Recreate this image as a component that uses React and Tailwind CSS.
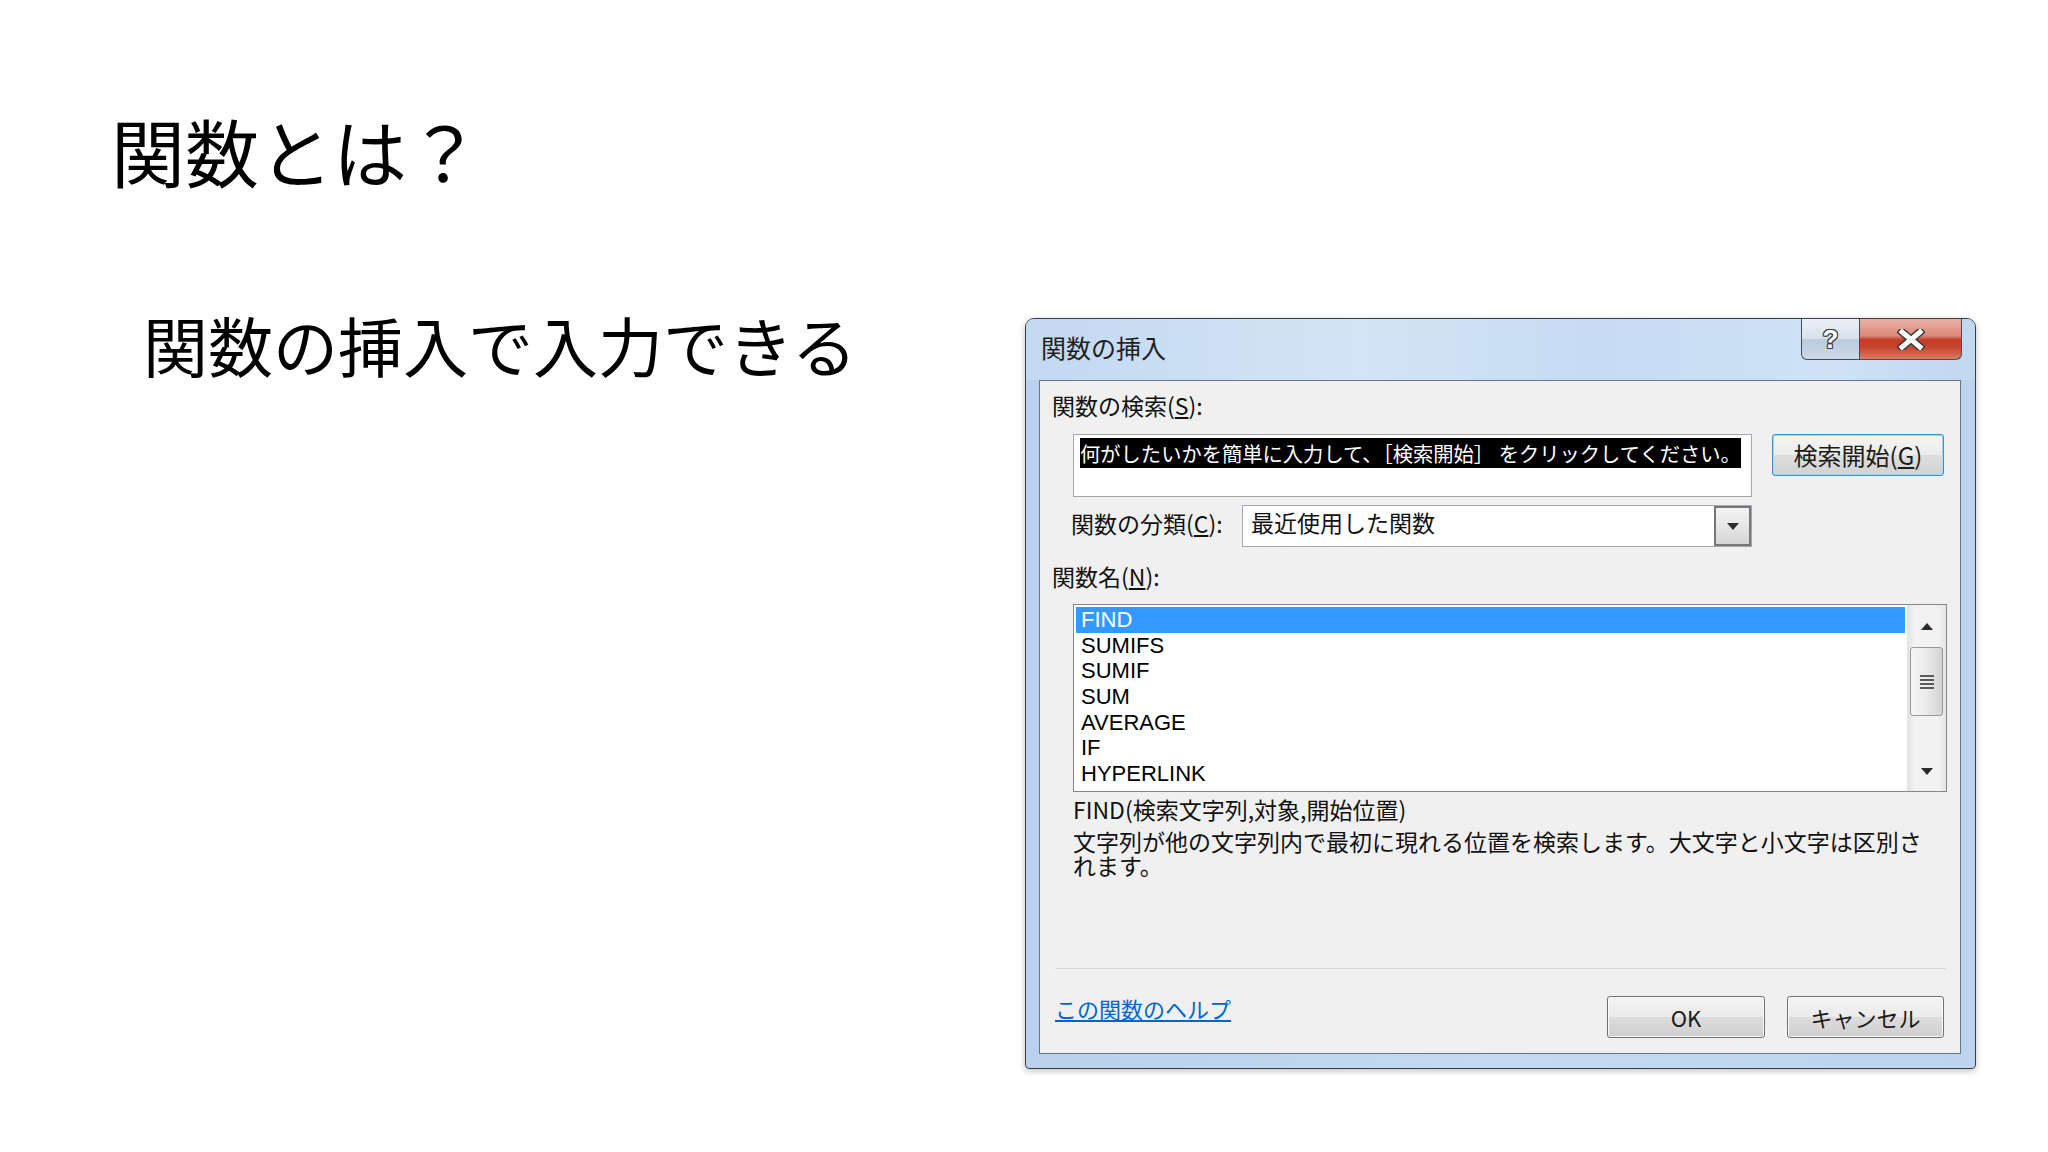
import React from "react";

const FONT = "font-['Noto_Sans_CJK_JP','Noto_Sans',sans-serif]";

const FUNCS = ["FIND", "SUMIFS", "SUMIF", "SUM", "AVERAGE", "IF", "HYPERLINK"];

function Arrow({ up, className = "" }) {
  return (
    <svg width="12" height="7" viewBox="0 0 12 7" className={className}>
      {up ? <path d="M0 7 L6 0 L12 7 Z" fill="#2b2b2b" /> : <path d="M0 0 L12 0 L6 7 Z" fill="#2b2b2b" />}
    </svg>
  );
}

function WinButton({ children, className = "" }) {
  return (
    <div
      className={`flex items-center justify-center rounded-[3px] border border-[#707070] bg-[linear-gradient(#f2f2f2_0%,#ebebeb_50%,#dddddd_50%,#cfcfcf_100%)] shadow-[inset_0_0_0_1px_#fbfbfb] text-[22px] leading-none text-[#1a1a1a] ${className}`}
    >
      {children}
    </div>
  );
}

function TitleButtons() {
  return (
    <div className="flex h-[41px]">
      {/* help */}
      <div className="flex w-[59px] items-center justify-center rounded-bl-[6px] border border-t-0 border-[#474d55] bg-[linear-gradient(#eaf0f7_0%,#d8e2ed_48%,#bccbdc_52%,#cbd9e8_100%)]">
        <span className="font-['Liberation_Sans',sans-serif] text-[26px] font-bold leading-none text-white [text-shadow:1px_0_#3a3a3a,-1px_0_#3a3a3a,0_1px_#3a3a3a,0_-1px_#3a3a3a,1px_1px_#3a3a3a,-1px_-1px_#3a3a3a,1px_-1px_#3a3a3a,-1px_1px_#3a3a3a]">
          ?
        </span>
      </div>
      {/* close */}
      <div className="flex w-[102px] items-center justify-center rounded-br-[6px] border border-l-0 border-t-0 border-[#474d55] bg-[linear-gradient(#eab0a3_0%,#dc8a78_42%,#c53c24_52%,#c8462f_72%,#dc7b64_100%)]">
        <svg width="28" height="21" viewBox="0 0 28 21">
          <path d="M5 3 L23 18 M23 3 L5 18" stroke="#3a3a3a" strokeWidth="8" strokeLinecap="square" />
          <path d="M5 3 L23 18 M23 3 L5 18" stroke="#ffffff" strokeWidth="5" strokeLinecap="square" />
        </svg>
      </div>
    </div>
  );
}

function FunctionList() {
  return (
    <div className="ml-[21px] mt-[13px] flex h-[188px] w-[874px] border border-[#828790] bg-white">
      <div className="flex-1 p-[2px] font-['Liberation_Sans',sans-serif] text-[22px] text-black">
        {FUNCS.map((name, i) => (
          <div
            key={name}
            className={`h-[25.7px] pl-[5px] leading-[25.7px] ${i === 0 ? "bg-[#3399ff] text-white" : ""}`}
          >
            {name}
          </div>
        ))}
      </div>
      {/* scrollbar */}
      <div className="flex w-[39px] flex-col bg-[linear-gradient(90deg,#e2e2e2,#f2f2f2_20%,#f2f2f2_80%,#e4e4e4)]">
        <div className="flex h-[42px] items-center justify-center">
          <Arrow up />
        </div>
        <div className="mx-[3px] flex h-[69px] flex-col items-center justify-center gap-[2px] rounded-[3px] border border-[#979797] bg-[linear-gradient(90deg,#f6f6f6,#ebebeb_50%,#d2d2d2)]">
          <div className="h-[2px] w-[14px] bg-[#5a5a5a]" />
          <div className="h-[2px] w-[14px] bg-[#5a5a5a]" />
          <div className="h-[2px] w-[14px] bg-[#5a5a5a]" />
          <div className="h-[2px] w-[14px] bg-[#5a5a5a]" />
        </div>
        <div className="flex-1" />
        <div className="flex h-[40px] items-center justify-center">
          <Arrow />
        </div>
      </div>
    </div>
  );
}

function InsertFunctionDialog() {
  return (
    <div className="mt-[6px] flex h-[751px] w-[951px] flex-col rounded-t-[9px] rounded-b-[4px] border border-[#3a3d42] bg-[linear-gradient(90deg,#b9d1ec,#c4daf2_50%,#bcd4ee)] shadow-[0_2px_6px_rgba(0,0,0,0.25)]">
      {/* title bar */}
      <div className="flex h-[61px] items-start justify-between rounded-t-[8px] bg-[linear-gradient(90deg,#c3d9f1_0%,#d3e4f6_35%,#c6dcf3_60%,#cfe2f6_85%,#c0d7f0_100%)] pl-[15px] pr-[13px]">
        <div className="pt-[13px] text-[25px] leading-[30px] text-[#1f1f1f]">関数の挿入</div>
        <TitleButtons />
      </div>

      {/* client panel */}
      <div className="ml-[13px] mr-[14px] flex h-[674px] flex-col border border-[#6b7685] bg-[#f0f0f0] pl-[12px] pr-[14px] pt-[9px] text-[#111]">
        <div className="h-[30px] text-[23px] leading-[30px]">
          関数の検索(<span className="underline underline-offset-2">S</span>):
        </div>

        <div className="mt-[14px] flex items-start">
          <div className="ml-[21px] h-[63px] w-[679px] border border-[#a3a8b0] bg-white pl-[6px] pt-[3px]">
            <span className="whitespace-nowrap bg-black text-[20.3px] text-white">
              何がしたいかを簡単に入力して、［検索開始］ をクリックしてください。
            </span>
          </div>
          <div className="ml-[20px] flex h-[42px] w-[172px] items-center justify-center rounded-[3px] border border-[#3c8fc6] bg-[linear-gradient(#f4f4f4_0%,#ececec_50%,#dedede_50%,#d2d2d2_100%)] shadow-[inset_0_0_0_1px_#9fdcf6] text-[24px] leading-none text-[#1a1a1a]">
            検索開始(<span className="underline underline-offset-2">G</span>)
          </div>
        </div>

        <div className="mt-[8px] flex h-[42px] items-center">
          <div className="w-[190px] pb-[6px] pl-[19px] text-[23px] leading-[30px]">
            関数の分類(<span className="underline underline-offset-2">C</span>):
          </div>
          <div className="flex h-full w-[510px] border border-[#a3a8b0] bg-white">
            <div className="flex-1 pl-[8px] text-[23px] leading-[33px]">最近使用した関数</div>
            <div className="flex w-[37px] items-center justify-center border-2 border-[#767676] bg-[linear-gradient(#f3f3f3,#e6e6e6_50%,#d6d6d6)]">
              <Arrow />
            </div>
          </div>
        </div>

        <div className="mt-[14px] h-[30px] text-[23px] leading-[30px]">
          関数名(<span className="underline underline-offset-2">N</span>):
        </div>

        <FunctionList />

        <div className="ml-[21px] mt-[5px] h-[24px] text-[23px] leading-[24px]">
          FIND(検索文字列,対象,開始位置)
        </div>
        <div className="ml-[21px] mt-[8px] text-[23px] leading-[24px] whitespace-nowrap">
          文字列が他の文字列内で最初に現れる位置を検索します。大文字と小文字は区別さ
          <br />
          れます。
        </div>

        <div className="flex-1" />

        <div className="ml-[3px] h-px w-[891px] bg-[#d8d8d8]" />
        <div className="mb-[15px] mt-[27px] flex h-[42px] items-start">
          <span className="ml-[3px] -mt-[2px] text-[22px] leading-[28px] text-[#0066cc] underline underline-offset-2">
            この関数のヘルプ
          </span>
          <div className="ml-auto mr-[2px] flex gap-[22px]">
            <WinButton className="h-[42px] w-[158px]">OK</WinButton>
            <WinButton className="h-[42px] w-[157px]">キャンセル</WinButton>
          </div>
        </div>
      </div>
      <div className="h-[14px]" />
    </div>
  );
}

export default function App() {
  return (
    <div className={`h-[1152px] w-[2048px] overflow-hidden bg-white text-black ${FONT}`}>
      <h1 className="pl-[111px] pt-[113px] text-[74px] font-normal leading-none">関数とは？</h1>
      <div className="mt-[125px] flex items-start justify-between pl-[143px] pr-[72px]">
        <p className="text-[65px] leading-none">関数の挿入で入力できる</p>
        <InsertFunctionDialog />
      </div>
    </div>
  );
}
